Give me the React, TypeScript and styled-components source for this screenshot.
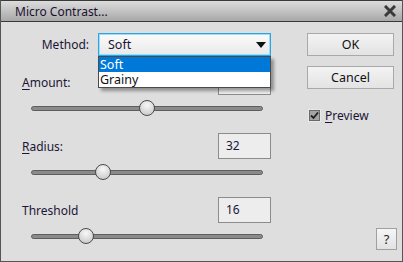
import { useState } from 'react';
import styled, { createGlobalStyle } from 'styled-components';

const GlobalStyle = createGlobalStyle`
	html, body {
		margin: 0;
		padding: 0;
		background: #dedede;
	}
	* {
		box-sizing: border-box;
	}
`;

const sliders = [
	{ key: 'amount', label: 'Amount:', hot: 'A', value: '', pos: 0.5 },
	{ key: 'radius', label: 'Radius:', hot: 'R', value: '32', pos: 0.31 },
	{ key: 'threshold', label: 'Threshold', hot: '', value: '16', pos: 0.235 },
];

function Label({ text, hot }: { text: string; hot: string }) {
	if (!hot) return <FieldLabel>{text}</FieldLabel>;
	return (
		<FieldLabel>
			<u>{hot}</u>
			{text.slice(hot.length)}
		</FieldLabel>
	);
}

export default function App() {
	const [method] = useState('Soft');

	return (
		<>
			<GlobalStyle />
			<Dialog>
				<TitleBar>
					<Title>Micro Contrast...</Title>
					<CloseIcon viewBox="0 0 12 12" width="12" height="12">
						<path d="M2 2 L10 10 M10 2 L2 10" stroke="#3a3a3a" strokeWidth="3" strokeLinecap="square" />
					</CloseIcon>
				</TitleBar>
				<Body>
					<LeftColumn>
						<MethodRow>
							<MethodLabel>Method:</MethodLabel>
							<SelectWrap>
								<Select>
									<span>{method}</span>
									<Arrow viewBox="0 0 10 6" width="10" height="6">
										<path d="M0 0 H10 L5 6 Z" fill="#111" />
									</Arrow>
								</Select>
								<DropList>
									<Option $active>Soft</Option>
									<Option>Grainy</Option>
								</DropList>
							</SelectWrap>
						</MethodRow>
						{sliders.map(s => (
							<Group key={s.key}>
								<InputRow>
									<Label text={s.label} hot={s.hot} />
									<ValueBox>{s.value}</ValueBox>
								</InputRow>
								<SliderRow>
									<Track>
										<Thumb style={{ left: `${s.pos * 100}%` }} />
									</Track>
								</SliderRow>
							</Group>
						))}
					</LeftColumn>
					<RightColumn>
						<Button>OK</Button>
						<Button>Cancel</Button>
						<CheckRow>
							<CheckBox viewBox="0 0 13 13" width="13" height="13">
								<rect x="0.5" y="0.5" width="12" height="12" fill="#9c9c9c" stroke="#e8e8e8" />
								<rect x="1.5" y="1.5" width="10" height="10" fill="#a4a4a4" stroke="#6a6a6a" />
								<path d="M3 6.5 L5.5 9 L10 3.5" stroke="#1e1e1e" strokeWidth="1.8" fill="none" />
							</CheckBox>
							<span>
								<u>P</u>review
							</span>
						</CheckRow>
						<HelpButton>?</HelpButton>
					</RightColumn>
				</Body>
			</Dialog>
		</>
	);
}

const Dialog = styled.div`
	width: 403px;
	height: 262px;
	display: flex;
	flex-direction: column;
	background: #dedede;
	border: 1px solid #555;
	border-top: none;
	font-family: 'Noto Sans', 'Open Sans', sans-serif;
	font-size: 12px;
	color: #1b1535;
	overflow: hidden;
`;

const TitleBar = styled.div`
	height: 22px;
	flex: none;
	display: flex;
	align-items: center;
	justify-content: space-between;
	padding: 0 7px 0 15px;
	background: linear-gradient(#dcdcdc, #a8a8a8);
	border-top: 1px solid #3a3a3a;
	border-bottom: 1px solid #3a3a3a;
	margin: 0 -1px;
`;

const Title = styled.span`
	font-size: 12px;
	color: #1a1030;
`;

const CloseIcon = styled.svg`
	display: block;
`;

const Body = styled.div`
	flex: 1;
	min-height: 0;
	display: flex;
	padding: 11px 7px 11px 21px;
`;

const LeftColumn = styled.div`
	width: 249px;
	display: flex;
	flex-direction: column;
`;

const MethodRow = styled.div`
	height: 23px;
	flex: none;
	display: flex;
	align-items: center;
	margin-bottom: 13px;
`;

const MethodLabel = styled.span`
	width: 67px;
	text-align: right;
	margin-right: 9px;
`;

const SelectWrap = styled.div`
	position: relative;
	width: 173px;
	height: 23px;
`;

const Select = styled.div`
	height: 100%;
	display: flex;
	align-items: center;
	justify-content: space-between;
	padding: 0 4px 0 9px;
	background: linear-gradient(#fbfbfb, #e9e9e9);
	border: 1px solid #2aa6e0;
	box-shadow: inset 0 0 0 1px #9fdcf6;
	font-size: 12.5px;
`;

const Arrow = styled.svg`
	display: block;
`;

const DropList = styled.div`
	position: absolute;
	top: 23px;
	left: 0;
	width: 173px;
	background: #fff;
	border: 1px solid #4a4a4a;
	box-shadow: 3px 3px 3px rgba(0, 0, 0, 0.35);
	z-index: 2;
`;

const Option = styled.div<{ $active?: boolean }>`
	height: 15px;
	line-height: 15px;
	padding-left: 1px;
	font-size: 12.5px;
	background: ${p => (p.$active ? '#0078d7' : '#fff')};
	color: ${p => (p.$active ? '#fff' : '#111')};
`;

const Group = styled.div`
	display: flex;
	flex-direction: column;
	flex: none;
	margin-bottom: 12px;

	&:last-child {
		margin-bottom: 0;
	}
`;

const InputRow = styled.div`
	height: 26px;
	display: flex;
	align-items: center;
	justify-content: space-between;
`;

const FieldLabel = styled.span`
	u {
		text-decoration-thickness: 1px;
		text-underline-offset: 2px;
	}
`;

const ValueBox = styled.div`
	width: 53px;
	height: 26px;
	padding: 3px 0 0 7px;
	background: #ededed;
	border: 1px solid #8c8c8c;
	color: #1b1535;
`;

const SliderRow = styled.div`
	height: 26px;
	display: flex;
	align-items: center;
	padding-left: 9px;
`;

const Track = styled.div`
	position: relative;
	width: 232px;
	height: 5px;
	border-radius: 3px;
	background: #8a8a8a;
	border: 1px solid #5e5e5e;
`;

const Thumb = styled.div`
	position: absolute;
	top: 50%;
	width: 16px;
	height: 16px;
	margin: -8px 0 0 -8px;
	border-radius: 50%;
	border: 1px solid #4a4a4a;
	background: radial-gradient(circle at 50% 30%, #f8f8f8, #cfcfcf 75%);
`;

const RightColumn = styled.div`
	flex: 1;
	display: flex;
	flex-direction: column;
	align-items: flex-start;
	padding-left: 36px;
`;

const Button = styled.div`
	width: 87px;
	height: 23px;
	margin-bottom: 10px;
	display: flex;
	align-items: center;
	justify-content: center;
	background: linear-gradient(#f3f3f3, #e3e3e3);
	border: 1px solid #a9a9a9;
	font-size: 12.5px;
	color: #111;
`;

const CheckRow = styled.div`
	display: flex;
	align-items: center;
	gap: 4px;
	margin: 8px 0 0 1px;
	u {
		text-underline-offset: 2px;
	}
`;

const CheckBox = styled.svg`
	display: block;
`;

const HelpButton = styled.div`
	margin-top: auto;
	align-self: flex-end;
	margin-right: -2px;
	width: 21px;
	height: 22px;
	display: flex;
	align-items: center;
	justify-content: center;
	background: linear-gradient(#f6f6f6, #e2e2e2);
	border: 1px solid #a0a0a0;
	font-size: 13px;
	color: #222;
`;
